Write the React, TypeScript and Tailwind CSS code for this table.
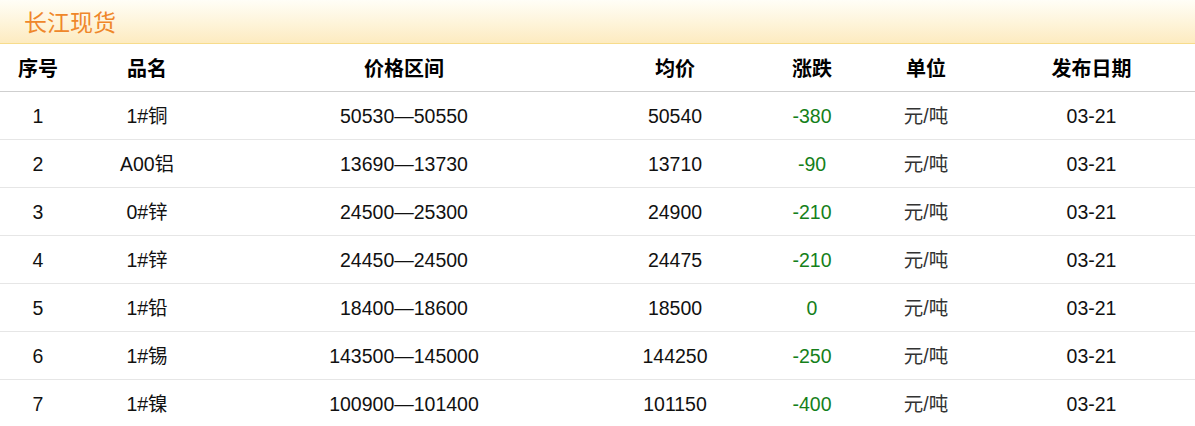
import React from "react";

const rows = [
  ["1", "1#铜", "50530—50550", "50540", "-380"],
  ["2", "A00铝", "13690—13730", "13710", "-90"],
  ["3", "0#锌", "24500—25300", "24900", "-210"],
  ["4", "1#锌", "24450—24500", "24475", "-210"],
  ["5", "1#铅", "18400—18600", "18500", "0"],
  ["6", "1#锡", "143500—145000", "144250", "-250"],
  ["7", "1#镍", "100900—101400", "101150", "-400"],
];

const cols = "grid grid-cols-[76px_142px_372px_170px_104px_124px_1fr]";

export default function App() {
  return (
    <div className="w-[1195px] h-[426px] overflow-hidden bg-white" style={{ fontFamily: '"Liberation Sans", Arial, "Noto Sans CJK SC", sans-serif' }}>
      <div className="h-[44px] border-b border-[#f7dc8c] bg-gradient-to-b from-[#fffef7] to-[#fdebc0] flex items-center pl-[24px]">
        <span className="text-[23px] text-[#ef872a] leading-none" style={{ fontFamily: '"Noto Sans CJK SC", sans-serif' }}>长江现货</span>
      </div>
      <div className={`${cols} h-[48px] items-center border-b border-[#cfcfcf] text-[20px] font-bold text-black text-center pt-[1px]`} style={{ fontFamily: '"Noto Sans CJK SC", sans-serif' }}>
        <div>序号</div>
        <div>品名</div>
        <div>价格区间</div>
        <div>均价</div>
        <div>涨跌</div>
        <div>单位</div>
        <div>发布日期</div>
      </div>
      {rows.map((r) => (
        <div key={r[0]} className={`${cols} h-[48px] items-center border-b border-[#e6e6e6] text-[19.5px] text-[#111] text-center pt-[3px]`}>
          <div>{r[0]}</div>
          <div>{r[1]}</div>
          <div>{r[2]}</div>
          <div>{r[3]}</div>
          <div className="text-[#15801a]">{r[4]}</div>
          <div className="text-[#333]">元/吨</div>
          <div>03-21</div>
        </div>
      ))}
    </div>
  );
}
